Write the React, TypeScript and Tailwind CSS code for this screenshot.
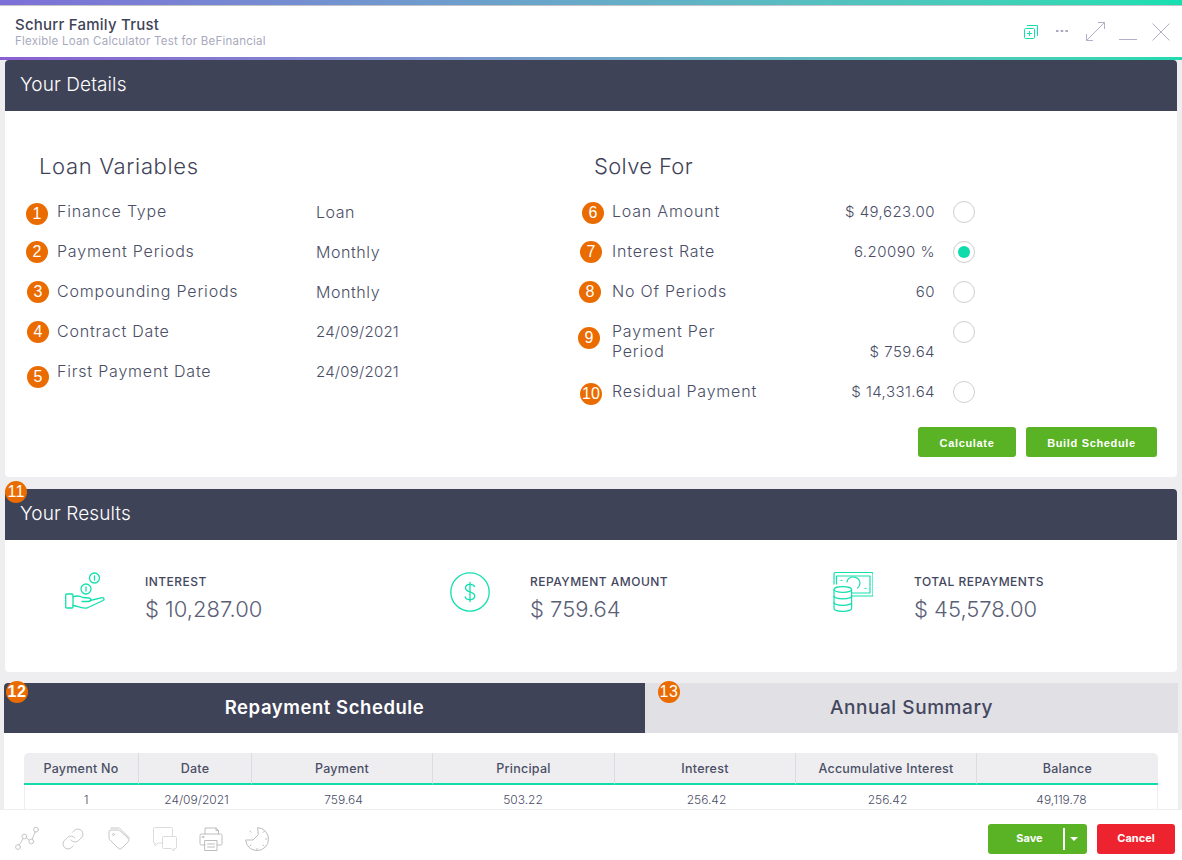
import type { ReactNode } from 'react';

const headerCols = ['Payment No', 'Date', 'Payment', 'Principal', 'Interest', 'Accumulative Interest', 'Balance'];
const firstRow = ['1', '24/09/2021', '759.64', '503.22', '256.42', '256.42', '49,119.78'];
const cellOffsets = ['pl-[9px]', 'pl-[4px]', 'pl-[4px]', '', 'pl-[4px]', 'pl-[4px]', 'pr-[10px]'];

function Badge({ n, className = '' }: { n: number; className?: string }) {
  return (
    <span className={`flex h-[22px] w-[22px] shrink-0 items-center justify-center rounded-full bg-[#ea6c00] font-['Liberation_Sans',sans-serif] text-[16px] leading-none text-white ${className}`}>
      {n}
    </span>
  );
}

function Radio({ checked = false, className = '' }: { checked?: boolean; className?: string }) {
  return (
    <span className={`ml-[18px] flex h-[22px] w-[22px] shrink-0 items-center justify-center rounded-full border border-[#cfcfcf] bg-white ${className}`}>
      {checked && <span className="h-[12px] w-[12px] rounded-full bg-[#0fdcaa]" />}
    </span>
  );
}

function VariableRow({ n, label, value, badgeClass, valueClass = '' }: { n: number; label: string; value: string; badgeClass: string; valueClass?: string }) {
  return (
    <div className="flex h-10 items-center">
      <div className="w-[31px] shrink-0">
        <Badge n={n} className={badgeClass} />
      </div>
      <div className="w-[259px] shrink-0 -translate-y-px text-[16px] font-light tracking-[0.05em] text-[#4a4e66]">{label}</div>
      <div className={`font-light text-[#4a4e66] ${valueClass}`}>{value}</div>
    </div>
  );
}

function SolveRow({ n, label, value, badgeClass, checked, tall }: { n: number; label: ReactNode; value: string; badgeClass: string; checked?: boolean; tall?: boolean }) {
  return (
    <div className={`flex items-center ${tall ? 'h-[60px]' : 'h-10'}`}>
      <div className="w-[34px] shrink-0">
        <Badge n={n} className={badgeClass} />
      </div>
      <div className="w-[150px] shrink-0 -translate-y-px text-[16px] leading-5 font-light tracking-[0.05em] text-[#4a4e66]">{label}</div>
      <div className={`w-[173px] shrink-0 text-right text-[15px] font-light tracking-[0.03em] text-[#4a4e66] ${tall ? 'translate-y-[10px]' : ''}`}>{value}</div>
      <Radio checked={checked} className={tall ? '-translate-y-[10px]' : ''} />
    </div>
  );
}

function SectionHeader({ title, children }: { title: string; children?: ReactNode }) {
  return (
    <div className="relative flex h-[51px] items-center rounded-t-[4px] bg-[#3f4358] pl-[15px] text-[19px] font-light tracking-[0.005em] text-white">
      {children}
      {title}
    </div>
  );
}

function Stat({ icon, label, value, className }: { icon: ReactNode; label: string; value: string; className: string }) {
  return (
    <div className={`flex shrink-0 ${className}`}>
      {icon}
      <div>
        <div className="mt-px h-[18px] text-[12px] leading-[18px] font-medium tracking-[0.04em] text-[#43475e]">{label}</div>
        <div className="mt-[3px] text-[22px] leading-[30px] font-light text-[#5b5f76]">{value}</div>
      </div>
    </div>
  );
}

function HandCoins() {
  return (
    <svg width="40" height="40" viewBox="0 0 40 40" fill="none" stroke="#14dfae" strokeWidth="1.3" strokeLinecap="round" strokeLinejoin="round" className="mr-[40px] shrink-0">
      <circle cx="29.5" cy="6" r="5" />
      <path d="M29.5 4v4" />
      <circle cx="21" cy="17" r="5" />
      <path d="M21 15v4" />
      <rect x="0.7" y="22" width="7.3" height="14" rx="1" />
      <path d="M8 25c4-2 7-1 10 .5l6 .5c2.5 0 2.5 3.5-.5 3.5H17" />
      <path d="M25 28.5l11-2.7c3-.6 4 1.700 2 2.700l-16 7.500c-4 1-9-2-14-2.500" />
    </svg>
  );
}

function DollarCircle() {
  return (
    <svg width="40" height="40" viewBox="0 0 40 40" fill="none" stroke="#14dfae" strokeWidth="1.3" strokeLinecap="round" className="mr-[40px] shrink-0">
      <circle cx="20" cy="20" r="19.200" />
      <path d="M20 10.500v19" />
      <path d="M24.500 14.500c-.5-1.500-2-2.200-4.500-2.200-2.700 0-4.500 1.400-4.500 3.600 0 5 9.200 2.800 9.200 8.100 0 2.200-2 3.600-4.700 3.600-2.600 0-4.300-1-4.800-2.800" />
    </svg>
  );
}

function MoneyStack() {
  return (
    <svg width="40" height="40" viewBox="0 0 40 40" fill="none" stroke="#14dfae" strokeWidth="1.200" strokeLinecap="round" strokeLinejoin="round" className="mr-[41px] shrink-0">
      <path d="M1 12V2a1.500 1.500 0 0 1 1.500-1.500h36A1.500 1.500 0 0 1 40 2v21a1 1 0 0 1-1 1H19" />
      <path d="M3.500 12V4h33.500v17H19" />
      <path d="M14 10c0-3 3-5 6.500-5s6.500 2.500 6.500 6c0 2-1 4-2.500 5" />
      <path d="M8 8.500h1M32 16.500h1" />
      <ellipse cx="9.800" cy="17.500" rx="8.800" ry="2.800" fill="#fff" />
      <path d="M1 17.500v19c0 1.500 4 2.800 8.800 2.800s8.800-1.300 8.800-2.800v-19" />
      <path d="M1 24c0 1.500 4 2.800 8.800 2.800s8.800-1.300 8.800-2.800M1 30.500c0 1.500 4 2.800 8.800 2.800s8.800-1.300 8.800-2.800" />
    </svg>
  );
}

function FooterIcons() {
  const props = { width: 24, height: 24, viewBox: '0 0 24 24', fill: 'none', stroke: '#c6c6c6', strokeWidth: 1, strokeLinecap: 'round' as const, strokeLinejoin: 'round' as const };
  return (
    <div className="flex items-center gap-[22px]">
      <svg {...props}>
        <circle cx="3" cy="20" r="2.400" />
        <circle cx="9.300" cy="9.500" r="2.400" />
        <circle cx="16.300" cy="14.500" r="2.400" />
        <circle cx="21" cy="2.700" r="2.400" />
        <path d="M4.200 18 8.100 11.600M11.300 10.900l3 2.200M17.200 12.300l2.900-7.400" />
      </svg>
      <svg {...props}>
        <path d="M10 13a5 5 0 0 0 7.540.54l3-3a5 5 0 0 0-7.070-7.070l-1.720 1.710" />
        <path d="M14 11a5 5 0 0 0-7.540-.54l-3 3a5 5 0 0 0 7.070 7.070l1.710-1.710" />
      </svg>
      <svg {...props}>
        <path d="M12.586 3.586A2 2 0 0 0 11.172 3H4a2 2 0 0 0-2 2v6.172a2 2 0 0 0 .586 1.414l8.704 8.704a2.426 2.426 0 0 0 3.420 0l6.580-6.580a2.426 2.426 0 0 0 0-3.420z" />
        <path d="M4 1h7.500a2 2 0 0 1 1.400.6L22.600 11" />
        <circle cx="6.500" cy="7.500" r="1" />
      </svg>
      <svg {...props} stroke="#dcdcdc">
        <path d="M10 16H5l-3 3v-3H1.500a1 1 0 0 1-1-1V1.500a1 1 0 0 1 1-1h17a1 1 0 0 1 1 1V9" />
        <path d="M10.500 9.500h12a1 1 0 0 1 1 1v10a1 1 0 0 1-1 1H21v2.500L18 21.500h-7.500a1 1 0 0 1-1-1v-10a1 1 0 0 1 1-1z" />
      </svg>
      <svg {...props} stroke="#bdbdbd">
        <path d="M6 7V1h11l2.500 2.500V7M17 1v2.500h2.500" />
        <path d="M6 18H2.500A1.500 1.500 0 0 1 1 16.500v-8A1.500 1.500 0 0 1 2.500 7h19A1.500 1.500 0 0 1 23 8.500v8a1.500 1.500 0 0 1-1.500 1.500H18" />
        <rect x="6" y="13.500" width="12" height="10" />
        <path d="M8.500 17h7M8.500 20h7" />
        <circle cx="4" cy="10" r="0.800" />
      </svg>
      <svg {...props} stroke="#bdbdbd">
        <path d="M13 .6A11.500 11.500 0 1 1 .6 13H8l5-5z" />
        <path d="M5 4l1 1.200M19 4.500l-1 1M22 12h-1.500M19 19l-1-1M12 23v-1.500M5 19l1-1" />
      </svg>
    </div>
  );
}

export default function App() {
  return (
    <div className="flex h-[860px] w-[1182px] flex-col overflow-hidden bg-[#eeeef0] font-[Inter,sans-serif]">
      <div className="h-[5px] shrink-0 bg-gradient-to-r from-[#7d6fd8] to-[#14e0b0]" />
      <div className="h-px shrink-0 bg-[#c4c4c8]" />
      <header className="flex h-[51px] shrink-0 items-center justify-between bg-white pr-[12px] pl-[15px]">
        <div>
          <div className="text-[15px] leading-[18px] font-medium tracking-[0.015em] text-[#3f4358]">Schurr Family Trust</div>
          <div className="text-[11.5px] leading-[14px] tracking-[0.02em] text-[#a9a9bd]">Flexible Loan Calculator Test for BeFinancial</div>
        </div>
        <div className="flex items-center">
          <svg width="14" height="14" viewBox="0 0 14 14" fill="none" stroke="#14dfae" strokeWidth="1" className="mt-[1px]">
            <rect x="0.500" y="3.500" width="10" height="10" rx="1" />
            <path d="M3 .5h10.500V11M5.500 6v5M3 8.500h5" />
          </svg>
          <svg width="12" height="4" viewBox="0 0 12 4" fill="#a9a9bd" className="ml-[18px] -translate-y-[1px]">
            <rect x="0" y="1" width="2.500" height="2" />
            <rect x="4.700" y="1" width="2.500" height="2" />
            <rect x="9.400" y="1" width="2.500" height="2" />
          </svg>
          <svg width="19" height="19" viewBox="0 0 19 19" fill="none" stroke="#b2b0c9" strokeWidth="1" className="ml-[18px]">
            <path d="M.5 18.500l18-18M12 .5h6.500V7M.5 12v6.500H7" />
          </svg>
          <svg width="18" height="19" viewBox="0 0 18 19" fill="none" stroke="#b2b0c9" strokeWidth="1" className="ml-[14px]">
            <path d="M0 17.500h18" />
          </svg>
          <svg width="18" height="18" viewBox="0 0 18 18" fill="none" stroke="#b2b0c9" strokeWidth="1" className="ml-[15px]">
            <path d="M.5.5l17 17M17.500.5l-17 17" />
          </svg>
        </div>
      </header>
      <div className="h-[3px] shrink-0 bg-gradient-to-r from-[#8a5fd4] to-[#1fdcb0]" />

      <main className="flex min-h-0 flex-1 flex-col gap-[12px] overflow-hidden px-[5px]">
        <section className="shrink-0 rounded-[4px] bg-white">
          <SectionHeader title="Your Details" />
          <div className="pt-10 pr-5 pb-5">
            <div className="flex">
              <div className="w-[555px] shrink-0 pl-[21px]">
                <h2 className="mb-[11px] ml-[13px] h-[30px] text-[22px] leading-[30px] font-light tracking-[0.03em] text-[#3f4358]">Loan Variables</h2>
                <VariableRow n={1} label="Finance Type" value="Loan" badgeClass="translate-y-[2px]" valueClass="text-[16px] tracking-[0.03em]" />
                <VariableRow n={2} label="Payment Periods" value="Monthly" badgeClass="" valueClass="text-[16px] tracking-[0.035em]" />
                <VariableRow n={3} label="Compounding Periods" value="Monthly" badgeClass="ml-px" valueClass="text-[16px] tracking-[0.035em]" />
                <VariableRow n={4} label="Contract Date" value="24/09/2021" badgeClass="ml-px" valueClass="text-[15px] tracking-[0.015em]" />
                <VariableRow n={5} label="First Payment Date" value="24/09/2021" badgeClass="ml-px translate-y-[5px]" valueClass="text-[15px] tracking-[0.015em]" />
              </div>
              <div className="pl-[18px]">
                <h2 className="mb-[11px] ml-4 h-[30px] text-[22px] leading-[30px] font-light tracking-[0.015em] text-[#3f4358]">Solve For</h2>
                <SolveRow n={6} label="Loan Amount" value="$ 49,623.00" badgeClass="ml-[4px] translate-y-[1px]" />
                <SolveRow n={7} label="Interest Rate" value="6.20090 %" badgeClass="ml-[2px]" checked />
                <SolveRow n={8} label="No Of Periods" value="60" badgeClass="ml-px" />
                <SolveRow n={9} label={<>Payment Per<br />Period</>} value="$ 759.64" badgeClass="-translate-y-[4px]" tall />
                <SolveRow n={10} label="Residual Payment" value="$ 14,331.64" badgeClass="ml-[2px] translate-y-[2px]" />
              </div>
            </div>
            <div className="mt-[15px] flex justify-end gap-[10px]">
              <button className="h-[30px] w-[98px] rounded-[3px] bg-[#5ab324] pt-[2px] font-['Liberation_Sans',sans-serif] text-[11px] font-bold tracking-[0.06em] text-white">Calculate</button>
              <button className="h-[30px] w-[131px] rounded-[3px] bg-[#5ab324] pt-[2px] font-['Liberation_Sans',sans-serif] text-[11px] font-bold tracking-[0.06em] text-white">Build Schedule</button>
            </div>
          </div>
        </section>

        <section className="h-[183px] shrink-0 rounded-[4px] bg-white">
          <SectionHeader title="Your Results">
            <Badge n={11} className="absolute -top-[8px] left-0" />
          </SectionHeader>
          <div className="flex pt-[32px] pl-[60px]">
            <Stat icon={<HandCoins />} label="INTEREST" value="$ 10,287.00" className="w-[385px]" />
            <Stat icon={<DollarCircle />} label="REPAYMENT AMOUNT" value="$ 759.64" className="w-[383px]" />
            <Stat icon={<MoneyStack />} label="TOTAL REPAYMENTS" value="$ 45,578.00" className="w-[300px]" />
          </div>
        </section>

        <section className="-mt-px -mr-px -ml-px shrink-0 bg-white">
          <div className="flex h-[50px]">
            <div className="relative flex w-[641px] items-center justify-center rounded-tl-[4px] bg-[#3f4358] pb-px text-[18.5px] font-semibold tracking-[0.03em] text-white">
              <Badge n={12} className="absolute -top-[2px] left-[2px]" />
              Repayment Schedule
            </div>
            <div className="relative flex flex-1 items-center justify-center bg-[#e1e0e5] text-[19px] font-medium tracking-[0.03em] text-[#43475e]">
              <Badge n={13} className="absolute -top-[2px] left-[13px]" />
              Annual Summary
            </div>
          </div>
          <div className="pt-5 pr-[20px] pl-5">
            <table className="w-[1134px] table-fixed border-separate border-spacing-0 text-center text-[12px]">
              <colgroup>
                <col className="w-[114px]" />
                <col className="w-[113px]" />
                <col className="w-[181px]" />
                <col className="w-[182px]" />
                <col className="w-[181px]" />
                <col className="w-[181px]" />
                <col className="w-[182px]" />
              </colgroup>
              <thead>
                <tr>
                  {headerCols.map((col, i) => (
                    <th
                      key={col}
                      className={`h-[32px] border-b-2 border-b-[#0fdcaa] bg-[#eeeef0] pt-[3px] text-[12.5px] font-medium tracking-[0.02em] text-[#4b4f66] ${i > 0 ? 'border-l border-l-[#dcdce0]' : 'rounded-tl-[5px]'} ${i === 6 ? 'rounded-tr-[5px]' : ''}`}
                    >
                      {col}
                    </th>
                  ))}
                </tr>
              </thead>
              <tbody>
                <tr>
                  {firstRow.map((cell, i) => (
                    <td key={i} className={`h-[30px] font-light text-[#4a4e66] ${cellOffsets[i]} ${i === 0 ? 'border-l border-l-[#eeeeee]' : ''} ${i === 6 ? 'border-r border-r-[#eeeeee]' : ''}`}>
                      {cell}
                    </td>
                  ))}
                </tr>
              </tbody>
            </table>
          </div>
        </section>
      </main>

      <footer className="flex h-[51px] shrink-0 items-center justify-between border-t border-[#eeeeee] bg-white pt-[7px] pr-[7px] pl-[15px]">
        <FooterIcons />
        <div className="flex items-center gap-[10px]">
          <div className="flex h-[30px] w-[99px] items-center rounded-[3px] bg-[#5ab324] text-white">
            <span className="flex-1 pl-[8px] text-center text-[11px] font-bold">Save</span>
            <span className="h-[22px] w-[2px] bg-white" />
            <span className="flex w-[22px] justify-center pr-[4px]">
              <span className="h-0 w-0 border-x-[4px] border-t-[4px] border-x-transparent border-t-white" />
            </span>
          </div>
          <button className="h-[30px] w-[78px] rounded-[3px] bg-[#ee2330] text-[11px] font-bold text-white">Cancel</button>
        </div>
      </footer>
    </div>
  );
}
